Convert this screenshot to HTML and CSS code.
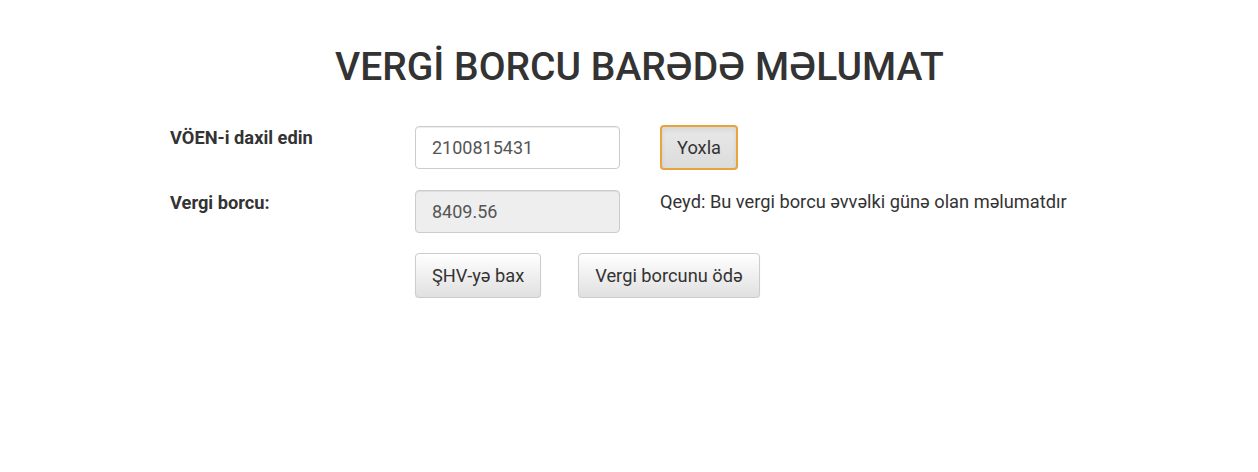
FILE: index.html
```html
<!DOCTYPE html>
<html lang="az">
<head>
  <meta charset="UTF-8">
  <meta name="viewport" content="width=device-width, initial-scale=1.0">
  <title>Vergi borcu</title>
  <link rel="stylesheet" href="styles.css">
</head>
<body>
  <main class="page">
    <h1 class="title">VERGİ BORCU BARƏDƏ MƏLUMAT</h1>
    <form class="debt-form" onsubmit="return false">
      <label class="field-label" for="voen">VÖEN-i daxil edin</label>
      <div class="cell">
        <input class="field" id="voen" type="text" value="2100815431">
      </div>
      <div class="cell">
        <button class="btn btn-active" type="button">Yoxla</button>
      </div>

      <label class="field-label" for="debt">Vergi borcu:</label>
      <div class="cell">
        <input class="field field-readonly" id="debt" type="text" value="8409.56" readonly>
      </div>
      <p class="note">Qeyd: Bu vergi borcu əvvəlki günə olan məlumatdır</p>

      <div class="cell"></div>
      <div class="actions">
        <button class="btn" type="button">ŞHV-yə bax</button>
        <button class="btn" type="button">Vergi borcunu ödə</button>
      </div>
    </form>
  </main>
</body>
</html>
```

FILE: styles.css
```css
body {
  font-family: Roboto, 'Noto Sans', sans-serif;
  margin: 0;
  padding: 0;
  background-color: #fff;
  color: #333;
}
.page {
  padding: 40px 0 0 170px;
}
.title {
  margin: 0 0 31px;
  padding-left: 165px;
  font-size: 39px;
  font-weight: 500;
  line-height: 54px;
  color: #333;
}
.debt-form {
  display: grid;
  grid-template-columns: 245px 245px auto;
  row-gap: 20px;
  font-size: 18.25px;
}
.cell {
  display: flex;
  align-items: center;
}
.field-label {
  font-weight: 700;
  line-height: 24px;
  padding-top: 1px;
}
.field {
  box-sizing: border-box;
  width: 205px;
  height: 43px;
  padding: 0 16px;
  font-family: inherit;
  font-size: 18px;
  color: #555;
  background-color: #fff;
  border: 1px solid #ccc;
  border-radius: 4px;
  box-shadow: inset 0 1px 1px rgba(0, 0, 0, 0.075);
  outline: none;
}
.field-readonly {
  background-color: #eee;
}
.note {
  margin: 0;
  line-height: 24px;
}
.actions {
  display: flex;
  gap: 37px;
  grid-column: 2 / 4;
}
.btn {
  height: 45px;
  padding: 0 16px;
  font-family: inherit;
  font-size: inherit;
  color: #333;
  background-image: linear-gradient(to bottom, #fff 0%, #e0e0e0 100%);
  border: 1px solid #ccc;
  border-radius: 4px;
  box-shadow: 0 1px 1px rgba(0, 0, 0, 0.08);
  cursor: pointer;
}
.btn-active {
  padding: 0 15px;
  background-image: linear-gradient(to bottom, #e8e8e8 0%, #dcdcdc 100%);
  border: 2px solid #e8a33d;
  box-shadow: inset 0 3px 5px rgba(0, 0, 0, 0.08);
}
```
